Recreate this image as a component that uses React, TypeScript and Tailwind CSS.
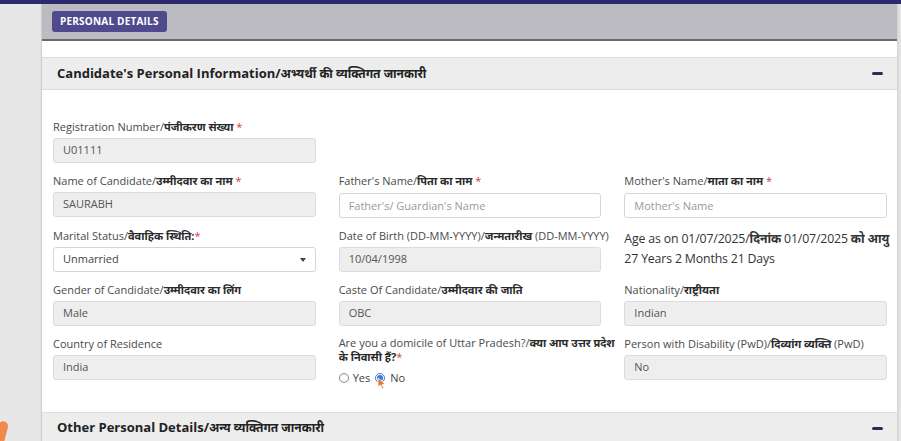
import { ReactNode } from 'react'

function Label({ children, hi, req, after }: { children: ReactNode; hi?: string; req?: boolean; after?: string }) {
  return (
    <label className="mb-[3px] block h-[16px] text-[11px] leading-[16px] text-[#4a4a4a] whitespace-nowrap">
      {children}
      {hi && <span className="font-bold text-[#2a2a2a]">{hi}</span>}
      {after}
      {req && <span className="text-[#d9383a]"> *</span>}
    </label>
  )
}

function ReadOnly({ value }: { value: string }) {
  return (
    <div className="flex h-[25px] items-center rounded-[3px] border border-[#dcdcdc] bg-[#eeeeee] px-[9px] text-[11px] text-[#555]">
      {value}
    </div>
  )
}

function TextInput({ placeholder }: { placeholder: string }) {
  return (
    <input
      placeholder={placeholder}
      className="h-[25px] w-full rounded-[3px] border border-[#d6d6d6] bg-white px-[9px] text-[11px] text-[#555] placeholder-[#9a9a9a] outline-none"
    />
  )
}

function SectionHeader({ title, hi }: { title: string; hi: string }) {
  return (
    <div className="flex h-[33px] items-center justify-between border-y border-[#dddddd] bg-[#ededed] pr-[14px] pl-[15px]">
      <h2 className="text-[13px] font-bold text-[#222]">
        {title}
        <span className="text-[12px]">{hi}</span>
      </h2>
      <span className="block h-[3px] w-[11px] rounded-sm bg-[#2c2a5c]" />
    </div>
  )
}

export default function App() {
  return (
    <div className="relative h-[441px] overflow-hidden bg-[#e7e7e7] font-['Open_Sans','Noto_Sans',sans-serif]">
      <div className="h-[4px] bg-[#2e2a6f]" />
      <div className="flex">
        <div className="w-[41px]" />
        <div className="w-[856px] border-l border-[#cfcfcf] bg-white shadow-[1px_0_3px_rgba(0,0,0,0.12)]">
          {/* personal details band */}
          <div className="flex h-[37px] items-center border-b-2 border-[#6a6a6a] bg-[#bcbbc1] px-[10px]">
            <span className="flex h-[21px] items-center rounded-[3px] bg-[#4e4a8d] px-[8px] text-[10px] font-bold tracking-[0.2px] text-white">
              PERSONAL DETAILS
            </span>
          </div>

          <div className="h-[16px]" />

          <SectionHeader title="Candidate's Personal Information/" hi="अभ्यर्थी की व्यक्तिगत जानकारी" />

          {/* form */}
          <div className="grid grid-cols-3 gap-x-[23px] gap-y-[10px] pt-[29px] pr-[10px] pb-[25px] pl-[11px]">
            <div>
              <Label hi="पंजीकरण संख्या" req>Registration Number/</Label>
              <ReadOnly value="U01111" />
            </div>
            <div />
            <div />

            <div>
              <Label hi="उम्मीदवार का नाम" req>Name of Candidate/</Label>
              <ReadOnly value="SAURABH" />
            </div>
            <div>
              <Label hi="पिता का नाम" req>Father's Name/</Label>
              <TextInput placeholder="Father's/ Guardian's Name" />
            </div>
            <div>
              <Label hi="माता का नाम" req>Mother's Name/</Label>
              <TextInput placeholder="Mother's Name" />
            </div>

            <div>
              <label className="mb-[3px] block h-[16px] text-[11px] leading-[16px] text-[#4a4a4a]">
                Marital Status/<span className="font-bold text-[#2a2a2a]">वैवाहिक स्थिति:</span>
                <span className="text-[#d9383a]">*</span>
              </label>
              <div className="flex h-[25px] items-center justify-between rounded-[3px] border border-[#d6d6d6] bg-white pr-[9px] pl-[9px] text-[11px] text-[#444]">
                <span>Unmarried</span>
                <span className="h-0 w-0 border-x-[3px] border-t-[4px] border-x-transparent border-t-[#444]" />
              </div>
            </div>
            <div>
              <Label hi="जन्मतारीख" after=" (DD-MM-YYYY)">Date of Birth (DD-MM-YYYY)/</Label>
              <ReadOnly value="10/04/1998" />
            </div>
            <div className="pt-[1px] text-[12.3px] leading-[20px] tracking-[-0.15px] text-[#333] whitespace-nowrap">
              <div>
                Age as on 01/07/2025/<span className="font-bold">दिनांक</span> 01/07/2025{' '}
                <span className="font-bold">को आयु</span>
              </div>
              <div>27 Years 2 Months 21 Days</div>
            </div>

            <div>
              <Label hi="उम्मीदवार का लिंग">Gender of Candidate/</Label>
              <ReadOnly value="Male" />
            </div>
            <div>
              <Label hi="उम्मीदवार की जाति">Caste Of Candidate/</Label>
              <ReadOnly value="OBC" />
            </div>
            <div>
              <Label hi="राष्ट्रीयता">Nationality/</Label>
              <ReadOnly value="Indian" />
            </div>

            <div>
              <Label>Country of Residence</Label>
              <ReadOnly value="India" />
            </div>
            <div>
              <p className="text-[11px] leading-[14px] whitespace-nowrap text-[#4a4a4a]">
                Are you a domicile of Uttar Pradesh?/
                <span className="font-bold text-[#2a2a2a]">क्या आप उत्तर प्रदेश</span>
                <br />
                <span className="font-bold text-[#2a2a2a]">के निवासी हैं?</span>
                <span className="text-[#d9383a]">*</span>
              </p>
              <div className="mt-[6px] flex items-center text-[11px] text-[#444]">
                <span className="h-[10px] w-[10px] rounded-full border border-[#888] bg-white" />
                <span className="ml-[4px]">Yes</span>
                <span className="relative ml-[5px] flex h-[10px] w-[10px] items-center justify-center rounded-full border border-[#3b7be0] bg-white">
                  <span className="h-[6px] w-[6px] rounded-full bg-[#3b7be0]" />
                  <svg className="absolute top-[3px] left-[1px]" width="10" height="13" viewBox="0 0 10 13">
                    <path d="M1 1 L1 10 L3.5 8 L5.5 12 L7 11.3 L5 7.5 L8.5 7.5 Z" fill="#f0701f" stroke="#fff" strokeWidth="0.8" />
                  </svg>
                </span>
                <span className="ml-[5px]">No</span>
              </div>
            </div>
            <div>
              <Label hi="दिव्यांग व्यक्ति" after=" (PwD)">Person with Disability (PwD)/</Label>
              <ReadOnly value="No" />
            </div>
          </div>

          <SectionHeader title="Other Personal Details/" hi="अन्य व्यक्तिगत जानकारी" />
        </div>
      </div>
      <div className="absolute bottom-[-6px] left-[-4px] h-[26px] w-[10px] rotate-[15deg] rounded-t-full bg-[#ef8a4c]" />
    </div>
  )
}
